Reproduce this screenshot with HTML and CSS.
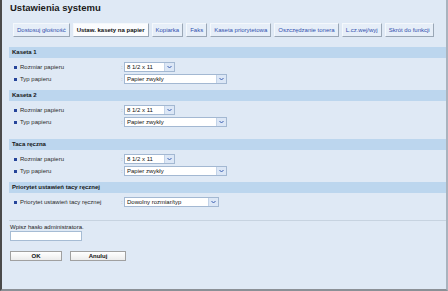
FILE: index.html
```html
<!DOCTYPE html>
<html lang="pl">
<head>
<meta charset="utf-8">
<title>Ustawienia systemu</title>
<link rel="stylesheet" href="styles.css">
</head>
<body>
<div class="page">
  <h1 class="title">Ustawienia systemu</h1>
  <div class="tabs">
    <div class="tab">Dostosuj głośność</div>
    <div class="tab active">Ustaw. kasety na papier</div>
    <div class="tab">Kopiarka</div>
    <div class="tab">Faks</div>
    <div class="tab">Kaseta priorytetowa</div>
    <div class="tab">Oszczędzanie tonera</div>
    <div class="tab">L.cz.wej/wyj</div>
    <div class="tab">Skrót do funkcji</div>
  </div>

  <div class="section first">
    <div class="band">Kaseta 1</div>
    <div class="rows">
      <div class="row"><span class="bullet"></span><span class="label">Rozmiar papieru</span><span class="colon">:</span><div class="select w-sm"><span class="val">8 1/2 x 11</span><span class="arrow"><svg width="5" height="4" viewBox="0 0 5 4"><path d="M0.5 1 L2.5 3 L4.5 1" fill="none" stroke="#3a5fb0" stroke-width="1"/></svg></span></div></div>
      <div class="row"><span class="bullet"></span><span class="label">Typ papieru</span><span class="colon">:</span><div class="select w-lg"><span class="val">Papier zwykły</span><span class="arrow"><svg width="5" height="4" viewBox="0 0 5 4"><path d="M0.5 1 L2.5 3 L4.5 1" fill="none" stroke="#3a5fb0" stroke-width="1"/></svg></span></div></div>
    </div>
  </div>

  <div class="section extra">
    <div class="band">Kaseta 2</div>
    <div class="rows">
      <div class="row"><span class="bullet"></span><span class="label">Rozmiar papieru</span><span class="colon">:</span><div class="select w-sm"><span class="val">8 1/2 x 11</span><span class="arrow"><svg width="5" height="4" viewBox="0 0 5 4"><path d="M0.5 1 L2.5 3 L4.5 1" fill="none" stroke="#3a5fb0" stroke-width="1"/></svg></span></div></div>
      <div class="row"><span class="bullet"></span><span class="label">Typ papieru</span><span class="colon">:</span><div class="select w-lg"><span class="val">Papier zwykły</span><span class="arrow"><svg width="5" height="4" viewBox="0 0 5 4"><path d="M0.5 1 L2.5 3 L4.5 1" fill="none" stroke="#3a5fb0" stroke-width="1"/></svg></span></div></div>
    </div>
  </div>

  <div class="section">
    <div class="band">Taca ręczna</div>
    <div class="rows">
      <div class="row"><span class="bullet"></span><span class="label">Rozmiar papieru</span><span class="colon">:</span><div class="select w-sm"><span class="val">8 1/2 x 11</span><span class="arrow"><svg width="5" height="4" viewBox="0 0 5 4"><path d="M0.5 1 L2.5 3 L4.5 1" fill="none" stroke="#3a5fb0" stroke-width="1"/></svg></span></div></div>
      <div class="row"><span class="bullet"></span><span class="label">Typ papieru</span><span class="colon">:</span><div class="select w-lg"><span class="val">Papier zwykły</span><span class="arrow"><svg width="5" height="4" viewBox="0 0 5 4"><path d="M0.5 1 L2.5 3 L4.5 1" fill="none" stroke="#3a5fb0" stroke-width="1"/></svg></span></div></div>
    </div>
  </div>

  <div class="section">
    <div class="band">Priorytet ustawień tacy ręcznej</div>
    <div class="rows">
      <div class="row"><span class="bullet"></span><span class="label">Priorytet ustawień tacy ręcznej</span><span class="colon">:</span><div class="select w-md"><span class="val">Dowolny rozmiar/typ</span><span class="arrow"><svg width="5" height="4" viewBox="0 0 5 4"><path d="M0.5 1 L2.5 3 L4.5 1" fill="none" stroke="#3a5fb0" stroke-width="1"/></svg></span></div></div>
    </div>
  </div>

  <div class="admin">
    <div class="prompt">Wpisz hasło administratora.</div>
    <div class="pwd"></div>
    <div class="buttons">
      <div class="btn ok">OK</div>
      <div class="btn cancel">Anuluj</div>
    </div>
  </div>
</div>
</body>
</html>
```

FILE: styles.css
```css
html, body {
  margin: 0;
  padding: 0;
}
body {
  font-family: "Liberation Sans", Arial, sans-serif;
  font-size: 6px;
  color: #222;
  background: #dfe9f5;
}
.page {
  box-sizing: border-box;
  width: 448px;
  height: 291px;
  background: #dfe9f5;
  border-left: 2px solid #4a4a4a;
  border-right: 2px solid #a9b3be;
  border-bottom: 2px solid #8b9096;
  padding: 0 0 0 7px;
}
.title {
  margin: 0;
  padding: 2px 0 0 1px;
  font-size: 9.5px;
  line-height: 11px;
  font-weight: bold;
  color: #1a1a1a;
}
.tabs {
  display: flex;
  gap: 3px;
  margin: 10px 0 0 4px;
  height: 14px;
}
.tab {
  box-sizing: border-box;
  height: 14px;
  line-height: 12px;
  padding: 0 3px;
  color: #2f4fae;
  background: #e6eef8;
  border-top: 1px solid #f4f8fc;
  border-left: 1px solid #f4f8fc;
  border-right: 1px solid #9aa7b6;
  border-bottom: 1px solid #9aa7b6;
  white-space: nowrap;
}
.tab.active {
  background: #fbfcfe;
  color: #111;
  font-weight: bold;
}
.section {
  margin-top: 0;
}
.section.first {
  margin-top: 10px;
}
.band {
  height: 11px;
  line-height: 11px;
  background: #bcd6ee;
  font-weight: bold;
  padding-left: 3px;
  color: #151515;
}
.rows {
  display: flex;
  flex-direction: column;
  gap: 2px;
  padding: 4px 0 6px 5px;
}
.section.extra .rows {
  padding-bottom: 12px;
}
.row {
  display: flex;
  align-items: center;
  height: 10px;
}
.bullet {
  width: 3px;
  height: 3px;
  background: #25449a;
  margin-right: 3px;
  flex: none;
}
.label {
  width: 101px;
  color: #2a2a2a;
  white-space: nowrap;
}
.colon {
  width: 3px;
  color: #9aa3ad;
}
.select {
  box-sizing: border-box;
  height: 10px;
  display: flex;
  align-items: stretch;
  background: #fff;
  border: 1px solid #a3b8d2;
}
.select .val {
  flex: 1;
  line-height: 8px;
  padding-left: 2px;
  color: #111;
  white-space: nowrap;
}
.select .arrow {
  width: 9px;
  display: flex;
  align-items: center;
  justify-content: center;
  background: #dce7f6;
  border-left: 1px solid #c3d3e8;
}
.w-sm { width: 51px; }
.w-lg { width: 103px; }
.w-md { width: 95px; }
.admin {
  margin-top: 7px;
  border-top: 1px solid #c7d3e0;
  padding: 2px 0 0 1px;
}
.prompt {
  line-height: 8px;
  color: #222;
}
.pwd {
  box-sizing: border-box;
  width: 72px;
  height: 10px;
  background: #fff;
  border: 1px solid #a6bcd4;
}
.buttons {
  display: flex;
  gap: 8px;
  margin-top: 10px;
}
.btn {
  box-sizing: border-box;
  height: 10px;
  line-height: 8px;
  text-align: center;
  font-weight: bold;
  color: #111;
  background: linear-gradient(#ffffff, #ececec);
  border: 1px solid #a0a0a0;
}
.btn.ok { width: 52px; }
.btn.cancel { width: 56px; }
```
